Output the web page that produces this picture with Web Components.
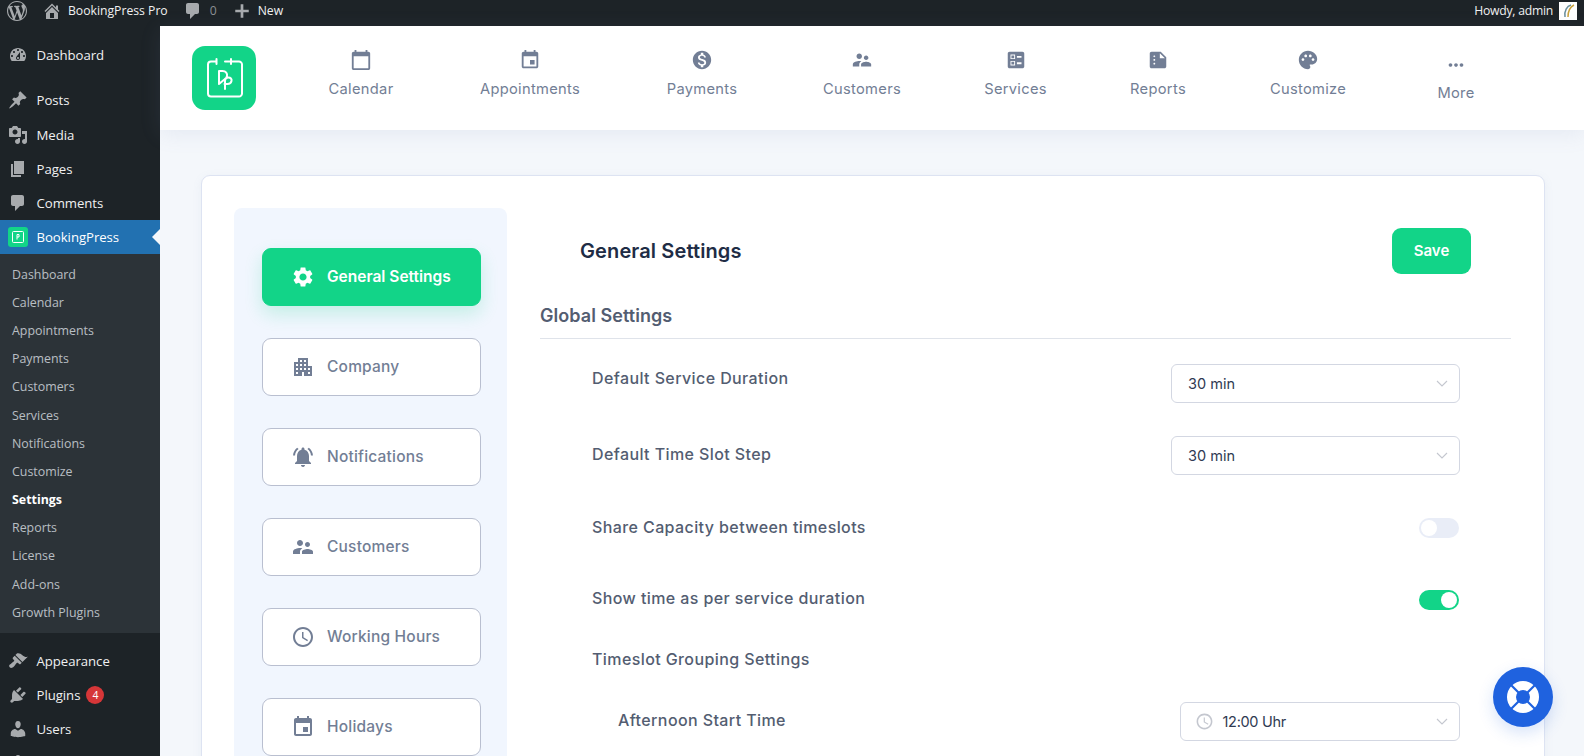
<!DOCTYPE html>
<html lang="en"><head><meta charset="utf-8"><title>BookingPress Settings</title>
<style>
html,body{margin:0;height:756px;overflow:hidden;background:#f4f7fb;font-family:"Open Sans","Liberation Sans",sans-serif}
</style></head><body>
<bp-app></bp-app>
<script>
const P={
wp:["0 0 20 20","M20 10c0-5.51-4.49-10-10-10C4.48 0 0 4.49 0 10c0 5.52 4.48 10 10 10 5.51 0 10-4.48 10-10zM7.78 15.37L4.37 6.22c.55-.02 1.17-.08 1.17-.08.5-.06.44-1.13-.06-1.11 0 0-1.45.11-2.37.11-.18 0-.37 0-.58-.01C4.12 2.69 6.87 1.11 10 1.11c2.33 0 4.45.87 6.05 2.34-.68-.11-1.65.39-1.65 1.58 0 .74.45 1.36.9 2.1.35.61.55 1.36.55 2.46 0 1.49-1.4 5-1.4 5l-3.03-8.37c.54-.02.82-.17.82-.17.5-.05.44-1.25-.06-1.22 0 0-1.44.12-2.38.12-.87 0-2.33-.12-2.33-.12-.5-.03-.56 1.2-.06 1.22l.92.08 1.26 3.41zM17.41 10c.24-.64.74-1.87.43-4.25.7 1.29 1.05 2.71 1.05 4.25 0 3.29-1.73 6.24-4.4 7.78.97-2.59 1.94-5.2 2.92-7.78zM6.1 18.09C3.12 16.65 1.11 13.53 1.11 10c0-1.3.23-2.48.72-3.59C3.25 10.3 4.67 14.2 6.1 18.09zm4.03-6.63l2.58 6.98c-.86.29-1.76.45-2.71.45-.79 0-1.57-.11-2.29-.33.81-2.38 1.62-4.74 2.42-7.1z"],
home:["0 0 20 20","M16 8.5l1.53 1.53-1.06 1.06L10 4.62l-6.47 6.47-1.06-1.06L10 2.5l4 4v-2h2v4zm-6-2.46l6 5.99V18H4v-5.97zM12 17v-5H8v5h4z"],
comment:["0 0 20 20","M5 2h9c1.1 0 2 .9 2 2v7c0 1.1-.9 2-2 2h-2l-5 5v-5H5c-1.1 0-2-.9-2-2V4c0-1.1.9-2 2-2z"],
plus:["0 0 20 20","M17.5 8.5v3h-6v6h-3v-6h-6v-3h6v-6h3v6z"],
dash:["0 0 20 20","M3.76 16h12.48c1.1-1.37 1.76-3.11 1.76-5 0-4.42-3.58-8-8-8s-8 3.58-8 8c0 1.89.66 3.63 1.76 5zM10 4c.55 0 1 .45 1 1s-.45 1-1 1-1-.45-1-1 .45-1 1-1zM6 6c.55 0 1 .45 1 1s-.45 1-1 1-1-.45-1-1 .45-1 1-1zm8 0c.55 0 1 .45 1 1s-.45 1-1 1-1-.45-1-1 .45-1 1-1zm-5.37 5.55L12 7v6c0 1.1-.9 2-2 2s-2-.9-2-2c0-.57.24-1.08.63-1.45zM4 10c.55 0 1 .45 1 1s-.45 1-1 1-1-.45-1-1 .45-1 1-1zm12 0c.55 0 1 .45 1 1s-.45 1-1 1-1-.45-1-1 .45-1 1-1zm-5 3c0-.55-.45-1-1-1s-1 .45-1 1 .45 1 1 1 1-.45 1-1z"],
pin:["0 0 20 20","M10.44 3.02l1.82-1.82 6.36 6.35-1.83 1.82c-1.05-.68-2.48-.57-3.41.36l-.75.75c-.92.93-1.04 2.35-.35 3.41l-1.83 1.82-2.41-2.41-2.8 2.79c-.42.42-3.38 2.71-3.8 2.29s1.86-3.39 2.28-3.81l2.79-2.79L4.1 9.36l1.83-1.82c1.05.69 2.48.57 3.4-.36l.75-.75c.93-.92 1.05-2.35.36-3.41z"],
media:["0 0 20 20","M13 11V4c0-.55-.45-1-1-1h-1.67L9 1H5L3.67 3H2c-.55 0-1 .45-1 1v7c0 .55.45 1 1 1h10c.55 0 1-.45 1-1zM7 4.5c1.38 0 2.5 1.12 2.5 2.5S8.38 9.5 7 9.5 4.5 8.38 4.5 7 5.62 4.5 7 4.5zM14 6h5v10.5c0 1.38-1.12 2.5-2.5 2.5S14 17.88 14 16.5s1.12-2.5 2.5-2.5c.17 0 .34.02.5.05V9h-3V6zm-4 8.05V13h2v3.5c0 1.38-1.12 2.5-2.5 2.5S7 17.88 7 16.5 8.12 14 9.5 14c.17 0 .34.02.5.05z"],
page:["0 0 20 20","M6 15V2h10v13H6zm-1 1h8v2H3V5h2v11z"],
brush:["0 0 20 20","M14.48 11.06L7.41 3.99l1.5-1.5c.5-.56 2.3-.47 3.51.32 1.21.8 1.43 1.28 2.91 2.1 1.18.64 2.45 1.26 4.45.85zm-.71.71L6.7 4.7 4.93 6.47c-.39.39-.39 1.02 0 1.41l1.06 1.06c.39.39.39 1.03 0 1.42-.6.6-1.43 1.11-2.21 1.69-.35.26-.7.53-1.01.84C1.43 13.23.4 14.98 1.72 16.3c1.32 1.33 3.08.3 4.42-1.05.31-.31.58-.66.85-1.02.57-.78 1.08-1.61 1.69-2.21.39-.39 1.02-.39 1.41 0l1.06 1.06c.39.39 1.02.39 1.41 0z"],
plug:["0 0 20 20","M13.11 4.36L9.87 7.6 8 5.73l3.24-3.24c.35-.34 1.05-.2 1.56.32.52.51.66 1.21.31 1.55zm-8 1.77l.91-1.12 9.01 9.01-1.19.84c-.71.71-2.63 1.16-3.82 1.16H6.14L4.9 17.26c-.59.59-1.54.59-2.12 0-.59-.58-.59-1.53 0-2.12l1.24-1.24v-3.88c0-1.13.4-3.19 1.09-3.89zm7.26 3.97l3.24-3.24c.34-.35 1.04-.21 1.55.31.52.51.66 1.21.31 1.55l-3.24 3.25z"],
user:["0 0 20 20","M10 9.25c-2.27 0-2.73-3.44-2.73-3.44C7 4.02 7.82 2 9.97 2c2.16 0 2.98 2.02 2.71 3.81 0 0-.41 3.44-2.68 3.44zm0 2.57L12.72 10c2.39 0 4.52 2.33 4.52 4.53v2.49s-3.65 1.13-7.24 1.13c-3.65 0-7.24-1.13-7.24-1.13v-2.49c0-2.25 1.94-4.48 4.47-4.48z"],
calendar:["0 0 24 24","M20 3h-1V1h-2v2H7V1H5v2H4c-1.1 0-2 .9-2 2v16c0 1.1.9 2 2 2h16c1.1 0 2-.9 2-2V5c0-1.1-.9-2-2-2zm0 18H4V8h16v13z"],
event:["0 0 24 24","M17 12h-5v5h5v-5zM16 1v2H8V1H6v2H5c-1.11 0-1.99.9-1.99 2L3 19c0 1.1.89 2 2 2h14c1.1 0 2-.9 2-2V5c0-1.1-.9-2-2-2h-1V1h-2zm3 18H5V8h14v11z"],
money:["0 0 24 24","M12 2C6.48 2 2 6.48 2 12s4.48 10 10 10 10-4.48 10-10S17.52 2 12 2zm1.41 16.09V20h-2.67v-1.93c-1.71-.36-3.16-1.46-3.27-3.4h1.96c.1 1.05.82 1.87 2.65 1.87 1.96 0 2.4-.98 2.4-1.59 0-.83-.44-1.61-2.67-2.14-2.48-.6-4.18-1.62-4.18-3.67 0-1.72 1.39-2.84 3.11-3.21V4h2.67v1.95c1.86.45 2.79 1.86 2.85 3.39H14.3c-.05-1.11-.64-1.87-2.22-1.87-1.5 0-2.4.68-2.4 1.64 0 .84.65 1.39 2.67 1.91s4.18 1.39 4.18 3.91c-.01 1.83-1.38 2.83-3.12 3.16z"],
people:["0 0 24 24","M16.5 12c1.38 0 2.49-1.12 2.49-2.5S17.88 7 16.5 7C15.12 7 14 8.12 14 9.5s1.12 2.5 2.5 2.5zM9 11c1.66 0 2.99-1.34 2.99-3S10.66 5 9 5C7.34 5 6 6.34 6 8s1.34 3 3 3zm7.5 3c-1.83 0-5.5.92-5.5 2.75V19h11v-2.25c0-1.83-3.67-2.75-5.5-2.75zM9 13c-2.33 0-7 1.17-7 3.5V19h7v-2.25c0-.85.33-2.34 2.37-3.47C10.5 13.1 9.66 13 9 13z"],
ballot:["0 0 24 24","M13 9.5h5v-2h-5v2zm0 7h5v-2h-5v2zm6 4.5H5c-1.1 0-2-.9-2-2V5c0-1.1.9-2 2-2h14c1.1 0 2 .9 2 2v14c0 1.1-.9 2-2 2zM6 11h5V6H6v5zm1-4h3v3H7V7zM6 18h5v-5H6v5zm1-4h3v3H7v-3z"],
report:["0 0 24 24","M15 3H5c-1.1 0-1.99.9-1.99 2L3 19c0 1.1.89 2 1.99 2H19c1.1 0 2-.9 2-2V9l-6-6zM8 17c-.55 0-1-.45-1-1s.45-1 1-1 1 .45 1 1-.45 1-1 1zm0-4c-.55 0-1-.45-1-1s.45-1 1-1 1 .45 1 1-.45 1-1 1zm0-4c-.55 0-1-.45-1-1s.45-1 1-1 1 .45 1 1-.45 1-1 1zm6 1V4.5l5.5 5.5H14z"],
palette:["0 0 24 24","M12 2C6.49 2 2 6.49 2 12s4.49 10 10 10c1.38 0 2.5-1.12 2.5-2.5 0-.61-.23-1.2-.64-1.67-.08-.1-.13-.21-.13-.33 0-.28.22-.5.5-.5H16c3.31 0 6-2.69 6-6 0-4.96-4.49-9-10-9zM6.5 13c-.83 0-1.5-.67-1.5-1.5S5.67 10 6.5 10s1.5.67 1.5 1.5S7.33 13 6.5 13zm3-4C8.67 9 8 8.33 8 7.5S8.67 6 9.5 6s1.5.67 1.5 1.5S10.33 9 9.5 9zm5 0c-.83 0-1.5-.67-1.5-1.5S13.67 6 14.5 6s1.5.67 1.5 1.5S15.33 9 14.5 9zm3 4c-.83 0-1.5-.67-1.5-1.5s.67-1.5 1.5-1.5 1.5.67 1.5 1.5-.67 1.5-1.5 1.5z"],
more:["0 0 24 24","M6 10c-1.1 0-2 .9-2 2s.9 2 2 2 2-.9 2-2-.9-2-2-2zm12 0c-1.1 0-2 .9-2 2s.9 2 2 2 2-.9 2-2-.9-2-2-2zm-6 0c-1.1 0-2 .9-2 2s.9 2 2 2 2-.9 2-2-.9-2-2-2z"],
gear:["0 0 24 24","M19.14 12.94c.04-.3.06-.61.06-.94 0-.32-.02-.64-.07-.94l2.03-1.58c.18-.14.23-.41.12-.61l-1.92-3.32c-.12-.22-.37-.29-.59-.22l-2.39.96c-.5-.38-1.03-.7-1.62-.94l-.36-2.54c-.04-.24-.24-.41-.48-.41h-3.84c-.24 0-.43.17-.47.41l-.36 2.54c-.59.24-1.13.57-1.62.94l-2.39-.96c-.22-.08-.47 0-.59.22L2.74 8.87c-.12.21-.08.47.12.61l2.03 1.58c-.05.3-.09.63-.09.94s.02.64.07.94l-2.03 1.58c-.18.14-.23.41-.12.61l1.92 3.32c.12.22.37.29.59.22l2.39-.96c.5.38 1.03.7 1.62.94l.36 2.54c.05.24.24.41.48.41h3.84c.24 0 .44-.17.47-.41l.36-2.54c.59-.24 1.13-.56 1.62-.94l2.39.96c.22.08.47 0 .59-.22l1.92-3.32c.12-.22.07-.47-.12-.61l-2.01-1.58zM12 15.6c-1.98 0-3.6-1.62-3.6-3.6s1.62-3.6 3.6-3.6 3.6 1.62 3.6 3.6-1.62 3.6-3.6 3.6z"],
building:["0 0 24 24","M17 11V3H7v4H3v14h8v-4h2v4h8V11h-4zM7 19H5v-2h2v2zm0-4H5v-2h2v2zm0-4H5V9h2v2zm4 4H9v-2h2v2zm0-4H9V9h2v2zm0-4H9V5h2v2zm4 8h-2v-2h2v2zm0-4h-2V9h2v2zm0-4h-2V5h2v2zm4 12h-2v-2h2v2zm0-4h-2v-2h2v2z"],
bell:["0 0 24 24","M7.58 4.08L6.15 2.65C3.75 4.48 2.17 7.3 2.03 10.5h2c.15-2.65 1.51-4.97 3.55-6.42zm12.39 6.42h2c-.15-3.2-1.73-6.02-4.12-7.85l-1.42 1.43c2.02 1.45 3.39 3.77 3.54 6.42zM18 11c0-3.07-1.64-5.64-4.5-6.32V4c0-.83-.67-1.5-1.5-1.5s-1.5.67-1.5 1.5v.68C7.63 5.36 6 7.92 6 11v5l-2 2v1h16v-1l-2-2v-5zm-6 11c.14 0 .27-.01.4-.04.65-.14 1.18-.58 1.44-1.18.1-.24.15-.5.15-.78h-4c.01 1.1.9 2 2.01 2z"],
clock:["0 0 24 24","M11.99 2C6.47 2 2 6.48 2 12s4.47 10 9.99 10C17.52 22 22 17.52 22 12S17.52 2 11.99 2zM12 20c-4.42 0-8-3.58-8-8s3.58-8 8-8 8 3.58 8 8-3.58 8-8 8zm.5-13H11v6l5.25 3.15.75-1.23-4.5-2.67z"]
};
function def(tag,html){customElements.define(tag,class extends HTMLElement{connectedCallback(){if(this.shadowRoot)return;const r=this.attachShadow({mode:"open"});r.innerHTML=typeof html==="function"?html(this):html}})}
const UI='"Inter","Liberation Sans",sans-serif';

def("bp-icon",h=>{const p=P[h.getAttribute("name")];return `<style>:host{display:inline-flex;flex:none;line-height:0}svg{width:100%;height:100%;fill:currentColor;display:block}</style><svg viewBox="${p[0]}" aria-hidden="true"><path d="${p[1]}"/></svg>`});

def("bp-logo",`<style>:host{display:block;width:64px;height:64px;flex:none}svg{display:block;width:100%;height:100%}</style>
<svg viewBox="0 0 64 64"><rect width="64" height="64" rx="13" fill="#12d488"/><g fill="none" stroke="#fff" stroke-width="2" stroke-linecap="round" stroke-linejoin="round">
<path d="M24 15.500h-5a3 3 0 0 0-3 3v29a3 3 0 0 0 3 3h28a3 3 0 0 0 3-3v-29a3 3 0 0 0-3-3H33M24.500 13v5M39 13v5"/>
<path d="M27 25v13M27 25h3.500c3.500 0 5 2.500 4.500 5-.3 1.500-1 2.500-2 3M27 38l6-5M33 43v-8c0-2 1.500-3.500 3.500-3.500s3.500 1.500 3 3.500-2 3-4 3h-3"/></g></svg>`);

def("wp-bar-item",h=>`<style>:host{display:flex;align-items:center;gap:var(--g,8px);color:#f0f0f1;font:12.200px/21px "Open Sans",sans-serif;white-space:nowrap;letter-spacing:var(--ls,0)}bp-icon{width:var(--s,20px);height:var(--s,20px);color:#a7aaad}</style>${h.getAttribute("icon")?`<bp-icon name="${h.getAttribute("icon")}"></bp-icon>`:""}<slot></slot>`);

def("wp-adminbar",`<style>:host{display:flex;height:26px;background:#1d2327;box-sizing:border-box;padding:0 7px 5px 7px;align-items:center;flex:none}
.sp{flex:1}.av{width:18px;height:18px;background:#fff;margin-left:6px;display:block}.n{color:#8c8f94}</style>
<wp-bar-item icon="wp"></wp-bar-item>
<wp-bar-item icon="home" style="margin-left:15px;--g:6px">BookingPress Pro</wp-bar-item>
<wp-bar-item icon="comment" style="margin-left:15px;--g:7px"><span class="n">0</span></wp-bar-item>
<wp-bar-item icon="plus" style="margin-left:16px;--g:7px;--s:18px">New</wp-bar-item>
<span class="sp"></span>
<wp-bar-item style="--ls:-.25px">Howdy, admin</wp-bar-item>
<svg class="av" viewBox="0 0 18 18"><rect width="18" height="18" fill="#fff"/><path d="M6 15C5 9 8 4 12 3" fill="none" stroke="#6b8f9c" stroke-width="1.500"/><path d="M9 15C9 9 11 5 15 3" fill="none" stroke="#c9a23c" stroke-width="1.500"/></svg>`);

def("wp-menu-item",h=>`<style>:host{display:flex;align-items:center;height:34px;color:#f0f0f1;font:13.200px "Open Sans",sans-serif;letter-spacing:-.05px;position:relative;white-space:nowrap}
:host([current]){background:#2271b1;color:#fff}
.ic{width:36.500px;display:flex;padding-left:8px;box-sizing:border-box}bp-icon{width:20px;height:20px;color:#a7aaad}
:host([current])::after{content:"";position:absolute;right:0;top:50%;margin-top:-8px;border:8px solid transparent;border-right-color:#f4f7fb;border-left:0}
.b{display:inline-block;width:18px;height:18px;line-height:18px;border-radius:50%;background:#d63638;color:#fff;font-size:10.500px;text-align:center;margin-left:6px}
.lg{width:20px;height:20px;border-radius:3px;background:#12d488;display:flex;align-items:center;justify-content:center}</style>
<span class="ic">${h.hasAttribute("logo")?`<span class="lg"><svg width="14" height="14" viewBox="0 0 14 14" fill="none" stroke="#fff" stroke-width="1"><rect x="1.500" y="1.500" width="11" height="11" rx="1"/><path d="M6 4.500v5M6 4.500h2v2.500H6"/></svg></span>`:h.getAttribute("icon")?`<bp-icon name="${h.getAttribute("icon")}"></bp-icon>`:""}</span><slot></slot>${h.getAttribute("badge")?`<span class="b">${h.getAttribute("badge")}</span>`:""}`);

def("wp-sub-item",`<style>:host{display:flex;align-items:center;height:28.200px;padding-left:12px;color:rgba(240,246,252,.72);font:12.400px "Open Sans",sans-serif;white-space:nowrap}
:host([current]){color:#fff;font-weight:700}</style><slot></slot>`);

def("wp-sidebar",`<style>:host{display:block;width:160px;background:#1d2327;flex:none;padding-top:12px;box-sizing:border-box;overflow:hidden}
.sep{height:11px}.sub{background:#2c3338;padding:6px 0 6.300px}.sep2{height:11px}</style>
<wp-menu-item icon="dash">Dashboard</wp-menu-item><div class="sep"></div>
<wp-menu-item icon="pin">Posts</wp-menu-item><wp-menu-item icon="media" style="height:35px">Media</wp-menu-item><wp-menu-item icon="page">Pages</wp-menu-item><wp-menu-item icon="comment">Comments</wp-menu-item>
<wp-menu-item current logo>BookingPress</wp-menu-item>
<div class="sub"><wp-sub-item>Dashboard</wp-sub-item><wp-sub-item>Calendar</wp-sub-item><wp-sub-item>Appointments</wp-sub-item><wp-sub-item>Payments</wp-sub-item><wp-sub-item>Customers</wp-sub-item><wp-sub-item>Services</wp-sub-item><wp-sub-item>Notifications</wp-sub-item><wp-sub-item>Customize</wp-sub-item><wp-sub-item current>Settings</wp-sub-item><wp-sub-item>Reports</wp-sub-item><wp-sub-item>License</wp-sub-item><wp-sub-item>Add-ons</wp-sub-item><wp-sub-item>Growth Plugins</wp-sub-item></div>
<div class="sep2"></div>
<wp-menu-item icon="brush">Appearance</wp-menu-item><wp-menu-item icon="plug" badge="4">Plugins</wp-menu-item><wp-menu-item icon="user">Users</wp-menu-item><wp-menu-item icon="user"></wp-menu-item>`);

def("bp-nav-item",h=>`<style>:host{display:flex;flex-direction:column;align-items:center;color:#727e95;font:400 14.700px/20px ${UI};white-space:nowrap;letter-spacing:.3px;padding-top:var(--t,0)}
bp-icon{width:22px;height:22px;margin-bottom:var(--m,8px)}</style><bp-icon name="${h.getAttribute("icon")}"></bp-icon><slot></slot>`);

def("bp-header",`<style>:host{display:flex;flex:none;height:104px;background:#fff;box-shadow:0 4px 20px rgba(120,140,180,.12);box-sizing:border-box;padding:20px 0 0 32px;position:relative}
nav{display:grid;grid-template-columns:152px 186px 158px 162px 145px 140px 160px 136px;margin-left:29px;padding-top:3px;align-items:start}</style>
<bp-logo></bp-logo>
<nav><bp-nav-item icon="calendar">Calendar</bp-nav-item><bp-nav-item icon="event">Appointments</bp-nav-item><bp-nav-item icon="money">Payments</bp-nav-item><bp-nav-item icon="people">Customers</bp-nav-item><bp-nav-item icon="ballot">Services</bp-nav-item><bp-nav-item icon="report">Reports</bp-nav-item><bp-nav-item icon="palette">Customize</bp-nav-item><bp-nav-item icon="more" style="--t:5px;--m:7px">More</bp-nav-item></nav>`);

def("bp-tab",h=>`<style>:host{display:flex;align-items:center;box-sizing:border-box;height:58px;border:1px solid #b9bfd0;border-radius:9px;background:#fff;color:#727e95;padding-left:28px;font:500 15.500px/20px ${UI};white-space:nowrap;letter-spacing:.2px}
:host([active]){background:#12d488;border-color:#12d488;color:#fff;box-shadow:0 8px 18px rgba(18,212,136,.2);font-weight:600;letter-spacing:0}
bp-icon{width:24px;height:24px;margin-right:12px}</style><bp-icon name="${h.getAttribute("icon")}"></bp-icon><slot></slot>`);

def("bp-select",h=>`<style>:host{display:flex;align-items:center;box-sizing:border-box;height:39px;width:var(--w,289px);border:1px solid #d3d7e2;border-radius:6px;background:#fff;padding:0 10px 0 16px;color:#2f3a52;font:400 14.500px/20px ${UI};letter-spacing:var(--ls,0);flex:none}
.t{flex:1}bp-icon{width:19px;height:19px;color:#c4c7cf;margin-right:8.500px;margin-left:-2px}svg{display:block}</style>${h.hasAttribute("clock")?`<bp-icon name="clock"></bp-icon>`:""}<span class="t"><slot></slot></span><svg width="14" height="8" viewBox="0 0 14 8" fill="none" stroke="#c4c7cf" stroke-width="1.100"><path d="M2 1l5 5 5-5"/></svg>`);

def("bp-toggle",`<style>:host{display:block;position:relative;width:40px;height:20px;border-radius:10px;background:#e9edf7;flex:none;margin-right:1px}
:host([on]){background:#12d488}i{position:absolute;left:2px;top:2px;width:16px;height:16px;border-radius:50%;background:#fff}:host([on]) i{left:22px}</style><i></i>`);

def("bp-field",`<style>:host{display:flex;justify-content:space-between;align-items:flex-start;font:500 16px/24px ${UI};letter-spacing:.4px;color:#535d71;white-space:nowrap}
.l{padding-top:var(--lo,0)}.r{padding-top:var(--ro,0);letter-spacing:0}</style><span class="l"><slot></slot></span><span class="r"><slot name="control"></slot></span>`);

def("bp-help",`<style>:host{position:fixed;left:1493px;top:667px;width:60px;height:60px;border-radius:50%;background:#1f62df;display:flex;align-items:center;justify-content:center;box-shadow:0 6px 16px rgba(31,98,223,.18)}svg{display:block}</style>
<svg width="34" height="34" viewBox="0 0 34 34"><circle cx="17" cy="17" r="16" fill="#fff"/><circle cx="17" cy="17" r="7" fill="#1f62df"/><g stroke="#1f62df" stroke-width="2.200"><path d="M5 5l8 8M29 5l-8 8M5 29l8-8M29 29l-8-8"/></g></svg>`);

def("bp-settings",`<style>:host{display:flex;flex:1;min-width:0;flex-direction:column;color:#535d71}
.top{display:flex;justify-content:space-between;padding:20px 40px 0}
h2{margin:0;font:600 20px/46px ${UI};color:#202c45;letter-spacing:.12px}
.save{width:79px;height:46px;border-radius:9px;background:#12d488;color:#fff;font:600 15px/46px ${UI};text-align:center}
h3{margin:30px 0 0;padding-bottom:10px;border-bottom:1px solid #dfe3ea;font:600 18px/24px ${UI};letter-spacing:.05px;color:#535d71}
.form{padding:25px 51px 0 52px}</style>
<div class="top"><h2>General Settings</h2><div class="save">Save</div></div>
<h3>Global Settings</h3>
<div class="form">
<bp-field style="--lo:2px">Default Service Duration<bp-select slot="control">30 min</bp-select></bp-field>
<bp-field style="margin-top:33px;--lo:6px">Default Time Slot Step<bp-select slot="control">30 min</bp-select></bp-field>
<bp-field style="margin-top:40px;--ro:3px">Share Capacity between timeslots<bp-toggle slot="control"></bp-toggle></bp-field>
<bp-field style="margin-top:47px;--ro:4px">Show time as per service duration<bp-toggle slot="control" on></bp-toggle></bp-field>
<bp-field style="margin-top:37px">Timeslot Grouping Settings</bp-field>
<bp-field style="margin-top:31px;--lo:6px;padding-left:26px">Afternoon Start Time<bp-select slot="control" clock style="--w:280px;--ls:-.3px">12:00 Uhr</bp-select></bp-field>
</div>`);

def("bp-app",`<style>:host{display:flex;flex-direction:column;height:756px;overflow:hidden}
.row{display:flex;flex:1;min-height:0}
main{flex:1;min-width:0;display:flex;flex-direction:column;background:#f4f7fb}
.wrap{padding:45px 39px 0 41px;flex:1}
.card{display:flex;gap:33px;background:#fff;border:1.500px solid #dde3f2;border-radius:9px;padding:32px 33px 0 32px;height:700px;box-sizing:border-box;box-shadow:0 2px 10px rgba(120,140,180,.08)}
aside{width:273px;flex:none;background:#f1f6fe;border-radius:8px;padding:40px 26px 0 28px;box-sizing:border-box;display:flex;flex-direction:column;gap:32px}</style>
<wp-adminbar></wp-adminbar>
<div class="row"><wp-sidebar></wp-sidebar><main><bp-header></bp-header><div class="wrap"><div class="card">
<aside><bp-tab active icon="gear">General Settings</bp-tab><bp-tab icon="building">Company</bp-tab><bp-tab icon="bell">Notifications</bp-tab><bp-tab icon="people">Customers</bp-tab><bp-tab icon="clock">Working Hours</bp-tab><bp-tab icon="event">Holidays</bp-tab></aside>
<bp-settings></bp-settings></div></div></main></div><bp-help></bp-help>`);
</script>
</body></html>
